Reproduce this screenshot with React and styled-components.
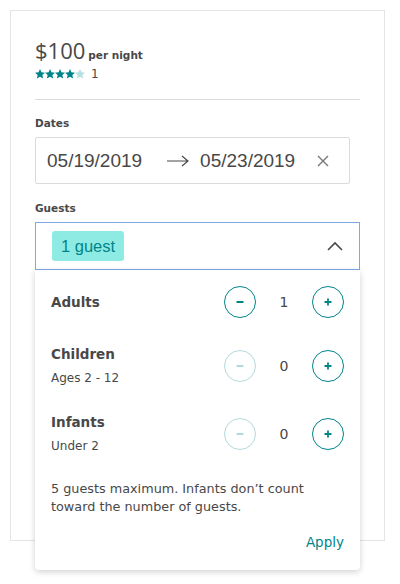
import React from "react";
import styled, { createGlobalStyle } from "styled-components";

const Global = createGlobalStyle`
  body {
    margin: 0;
    background: #fff;
    font-family: "DejaVu Sans", "Open Sans", sans-serif;
    color: #484848;
  }
`;

const Page = styled.div`
  min-height: 584px;
  box-sizing: border-box;
  padding: 10px 0 0 10px;
`;

const Card = styled.div`
  width: 375px;
  box-sizing: border-box;
  border: 1px solid #e4e4e4;
  padding: 24px 24px 62px;
`;

const PriceLine = styled.div`
  display: flex;
  align-items: baseline;
  gap: 3px;
  height: 30px;
`;

const Price = styled.span`
  font-family: "Open Sans", sans-serif;
  font-size: 22px;
  color: #484848;
`;

const PerNight = styled.span`
  font-size: 10.5px;
  font-weight: 700;
`;

const Rating = styled.div`
  display: flex;
  align-items: center;
  gap: 6px;
  margin-top: 2px;
  font-size: 12px;
`;

const Stars = styled.div`
  display: flex;
`;

const Divider = styled.hr`
  border: 0;
  border-top: 1px solid #dcdcdc;
  margin: 18px 0 15px;
`;

const Label = styled.div`
  font-size: 10.5px;
  line-height: 16px;
  font-weight: 700;
  margin-bottom: 6px;
`;

const DateBox = styled.div`
  width: 315px;
  height: 47px;
  box-sizing: border-box;
  border: 1px solid #dbdbdb;
  border-radius: 2px;
  display: flex;
  align-items: center;
  padding-left: 11px;
  font-family: "Liberation Sans", Arial, sans-serif;
  font-size: 19px;
  color: #484848;
  margin-bottom: 16px;
`;

const Arrow = styled.span`
  margin: 0 11px 0 25px;
  display: flex;
`;

const Clear = styled.span`
  margin-left: 22px;
  display: flex;
`;

const GuestWrap = styled.div`
  position: relative;
`;

const Select = styled.div`
  height: 48px;
  box-sizing: border-box;
  border: 1px solid #7fa9e3;
  display: flex;
  align-items: center;
  justify-content: space-between;
  padding: 0 16px 0 16px;
`;

const Chip = styled.span`
  background: #8eebe3;
  color: #00848a;
  border-radius: 3px;
  padding: 0 9px;
  height: 30px;
  line-height: 30px;
  font-family: "Liberation Sans", Arial, sans-serif;
  font-size: 16.5px;
`;

const Panel = styled.div`
  position: absolute;
  top: 48px;
  left: 0;
  right: 0;
  background: #fff;
  border-radius: 0 0 4px 4px;
  box-shadow: 0 2px 6px rgba(0, 0, 0, 0.18);
  padding: 16px 16px 19px;
  z-index: 2;
`;

const Row = styled.div`
  display: flex;
  align-items: center;
  justify-content: space-between;
  margin-bottom: ${(p) => p.gap}px;
`;

const Name = styled.div`
  font-size: 13.5px;
  line-height: 18px;
  font-weight: 700;
  color: #484848;
`;

const Sub = styled.div`
  font-size: 12px;
  line-height: 16px;
  margin-top: 7px;
`;

const Counter = styled.div`
  display: flex;
  align-items: center;
`;

const Circle = styled.div`
  width: 32px;
  height: 32px;
  box-sizing: border-box;
  border-radius: 50%;
  border: 1px solid ${(p) => (p.off ? "rgba(0,132,137,0.3)" : "#008489")};
  display: flex;
  align-items: center;
  justify-content: center;
`;

const Count = styled.span`
  width: 56px;
  text-align: center;
  font-size: 14px;
`;

const Note = styled.p`
  margin: 26px 0 0;
  font-size: 12.8px;
  line-height: 18px;
`;

const Footer = styled.div`
  display: flex;
  justify-content: flex-end;
  margin-top: 18px;
`;

const Apply = styled.button`
  border: 0;
  background: none;
  padding: 0;
  font-family: inherit;
  font-size: 13.5px;
  line-height: 17px;
  color: #008489;
`;

const Book = styled.button`
  margin-top: 160px;
  width: 100%;
  height: 46px;
  border: 1px solid #bbb;
  background: #fff;
`;

const Star = ({ color }) => (
  <svg width="10" height="10" viewBox="0 0 24 24">
    <path
      fill={color}
      d="M12 0l3.5 8 8.5.8-6.4 5.7 1.9 8.5L12 18.5 4.5 23l1.9-8.5L0 8.8 8.5 8z"
    />
  </svg>
);

const Stepper = ({ value, minusOff }) => (
  <Counter>
    <Circle off={minusOff}>
      <svg width="10" height="10" viewBox="0 0 10 10">
        <path d="M1.5 5h7" stroke={minusOff ? "rgba(0,132,137,0.3)" : "#008489"} strokeWidth="2" />
      </svg>
    </Circle>
    <Count>{value}</Count>
    <Circle>
      <svg width="10" height="10" viewBox="0 0 10 10">
        <path d="M1.5 5h7M5 1.5v7" stroke="#008489" strokeWidth="1.8" />
      </svg>
    </Circle>
  </Counter>
);

export default function App() {
  return (
    <>
      <Global />
      <Page>
        <Card>
          <PriceLine>
            <Price>$100</Price>
            <PerNight>per night</PerNight>
          </PriceLine>
          <Rating>
            <Stars>
              {[0, 1, 2, 3, 4].map((i) => (
                <Star key={i} color={i < 4 ? "#008489" : "#b4e0e2"} />
              ))}
            </Stars>
            <span>1</span>
          </Rating>
          <Divider />
          <Label>Dates</Label>
          <DateBox>
            05/19/2019
            <Arrow>
              <svg width="22" height="12" viewBox="0 0 22 12">
                <path d="M0 6h21M15 1l6 5-6 5" fill="none" stroke="#484848" strokeWidth="1.2" />
              </svg>
            </Arrow>
            05/23/2019
            <Clear>
              <svg width="12" height="12" viewBox="0 0 12 12">
                <path d="M1 1l10 10M11 1L1 11" stroke="#777" strokeWidth="1.4" />
              </svg>
            </Clear>
          </DateBox>
          <Label>Guests</Label>
          <GuestWrap>
            <Select>
              <Chip>1 guest</Chip>
              <svg width="16" height="10" viewBox="0 0 16 10">
                <path d="M1 9l7-7 7 7" fill="none" stroke="#484848" strokeWidth="1.6" />
              </svg>
            </Select>
            <Panel>
              <Row gap={27}>
                <Name>Adults</Name>
                <Stepper value={1} />
              </Row>
              <Row gap={27}>
                <div>
                  <Name>Children</Name>
                  <Sub>Ages 2 - 12</Sub>
                </div>
                <Stepper value={0} minusOff />
              </Row>
              <Row gap={0}>
                <div>
                  <Name>Infants</Name>
                  <Sub>Under 2</Sub>
                </div>
                <Stepper value={0} minusOff />
              </Row>
              <Note>
                5 guests maximum. Infants don’t count toward the number of guests.
              </Note>
              <Footer>
                <Apply>Apply</Apply>
              </Footer>
            </Panel>
          </GuestWrap>
          <Book />
        </Card>
      </Page>
    </>
  );
}
